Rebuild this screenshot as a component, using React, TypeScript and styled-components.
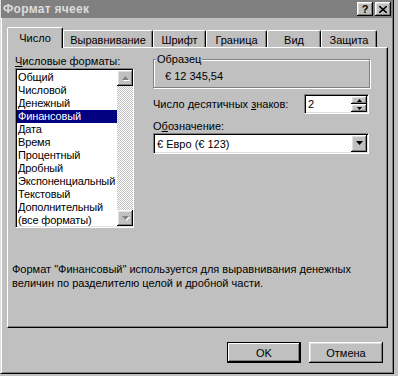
import * as React from "react"
import styled, { createGlobalStyle } from "styled-components"

const GlobalStyle = createGlobalStyle`
  html, body {
    margin: 0;
    padding: 0;
    background: #c0c0c0;
  }
  body {
    font-family: "Liberation Sans", Arial, sans-serif;
    font-size: 11px;
    color: #000;
  }
`

const raised = `
  box-shadow: inset -1px -1px #000, inset 1px 1px #fff, inset -2px -2px #808080, inset 2px 2px #dfdfdf;
`

const sunken = `
  border: 1px solid;
  border-color: #808080 #fff #fff #808080;
  box-shadow: inset 1px 1px #000, inset -1px -1px #dfdfdf;
`

const Dialog = styled.div`
  width: 394px;
  height: 374px;
  box-sizing: border-box;
  display: flex;
  flex-direction: column;
  background: #c0c0c0;
  border-left: 1px solid #dfdfdf;
  border-right: 1px solid #000;
  border-bottom: 1px solid #000;
  box-shadow: inset 1px 0 #fff, inset -1px -1px #808080;
`

const TitleBar = styled.div`
  height: 18px;
  display: flex;
  align-items: center;
  background: #808080;
  padding: 0 2px 0 2px;
`

const Title = styled.div`
  flex: 1;
  color: #dcdcdc;
  font-weight: bold;
  font-size: 12px;
  letter-spacing: 0.3px;
`

const TitleButton = styled.div`
  width: 16px;
  height: 14px;
  margin-left: 2px;
  background: #c0c0c0;
  ${raised}
  display: flex;
  align-items: center;
  justify-content: center;
  font-weight: bold;
  font-size: 11px;
  line-height: 14px;
`

const Body = styled.div`
  padding: 9px 5px 0 6px;
`

const TabStrip = styled.div`
  height: 20px;
  display: flex;
  align-items: flex-end;
  position: relative;
  z-index: 1;
`

const Tab = styled.div<{ $w: number; $active?: boolean }>`
  width: ${p => p.$w}px;
  height: ${p => (p.$active ? 21 : 17)}px;
  margin-bottom: ${p => (p.$active ? -1 : 0)}px;
  box-sizing: border-box;
  background: #c0c0c0;
  border-top: 1px solid #fff;
  border-left: 1px solid #fff;
  border-right: 1px solid #000;
  border-radius: 2px 2px 0 0;
  box-shadow: inset -1px 0 #808080;
  display: flex;
  align-items: center;
  justify-content: center;
  padding-top: ${p => (p.$active ? 0 : 1)}px;
  white-space: nowrap;
`

const Panel = styled.div`
  width: 381px;
  height: 281px;
  box-sizing: border-box;
  border-top: 1px solid #fff;
  border-left: 1px solid #fff;
  border-right: 1px solid #000;
  border-bottom: 1px solid #000;
  box-shadow: inset -1px -1px #808080;
  padding: 7px 0 0 4px;
`

const TopRow = styled.div`
  display: flex;
  margin-left: 3px;
`

const LeftColumn = styled.div`
  display: flex;
  flex-direction: column;
`

const RightColumn = styled.div`
  width: 217px;
  margin-left: 19px;
  display: flex;
  flex-direction: column;
`

const Label = styled.div`
  line-height: 13px;
  height: 13px;
  white-space: nowrap;
`

const ListBox = styled.div`
  width: 119px;
  height: 160px;
  box-sizing: border-box;
  ${sunken}
  background: #fff;
  display: flex;
  padding: 1px 0 1px 1px;
`

const Items = styled.div`
  flex: 1;
  min-width: 0;
  padding-top: 1px;
  overflow: hidden;
`

const Item = styled.div<{ $selected?: boolean }>`
  height: 13px;
  line-height: 13px;
  padding-left: 1px;
  letter-spacing: -0.15px;
  white-space: nowrap;
  background: ${p => (p.$selected ? "#000080" : "transparent")};
  color: ${p => (p.$selected ? "#fff" : "#000")};
`

const ScrollBar = styled.div`
  width: 16px;
  flex-shrink: 0;
  display: flex;
  flex-direction: column;
`

const Track = styled.div`
  flex: 1;
  background: repeating-conic-gradient(#c0c0c0 0 25%, #fff 0 50%) 0 0 / 2px 2px;
`

const ArrowButton = styled.div<{ $h?: number }>`
  width: 16px;
  height: ${p => p.$h ?? 16}px;
  flex-shrink: 0;
  background: #c0c0c0;
  ${raised}
  display: flex;
  align-items: center;
  justify-content: center;
`

const GroupBox = styled.div`
  position: relative;
  margin-top: 4px;
  height: 29px;
  box-sizing: border-box;
  border: 1px solid #808080;
  box-shadow: inset 1px 1px #fff, 1px 1px #fff;
  padding: 10px 0 0 11px;
`

const Legend = styled.div`
  position: absolute;
  top: -7px;
  left: 2px;
  padding: 0 1px;
  line-height: 13px;
  background: #c0c0c0;
`

const SampleText = styled.div`
  line-height: 13px;
`

const SpinRow = styled.div`
  margin-top: 6px;
  height: 20px;
  display: flex;
  align-items: center;
  justify-content: space-between;
  padding-right: 1px;
`

const Field = styled.div<{ $w: number; $h: number }>`
  width: ${p => p.$w}px;
  height: ${p => p.$h}px;
  box-sizing: border-box;
  ${sunken}
  background: #fff;
  display: flex;
  align-items: stretch;
  padding: 1px;
`

const FieldText = styled.div`
  flex: 1;
  display: flex;
  align-items: center;
  padding-left: 2px;
  white-space: nowrap;
`

const SpinButtons = styled.div`
  display: flex;
  flex-direction: column;
`

const SymbolLabel = styled(Label)`
  margin-top: 6px;
`

const ComboWrap = styled.div`
  padding-right: 1px;
`

const Description = styled.div`
  margin-top: 34px;
  line-height: 14px;
`

const ButtonRow = styled.div`
  display: flex;
  justify-content: flex-end;
  gap: 8px;
  margin-top: 14px;
  padding-right: 5px;
`

const Button = styled.div<{ $default?: boolean }>`
  width: 74px;
  height: 21px;
  box-sizing: border-box;
  background: #c0c0c0;
  display: flex;
  align-items: center;
  justify-content: center;
  ${p =>
    p.$default
      ? `border: 1px solid #000; box-shadow: inset -1px -1px #000, inset 1px 1px #fff, inset -2px -2px #808080;`
      : raised}
`

const Arrow = ({ up, disabled }: { up?: boolean; disabled?: boolean }) => (
  <svg width="7" height="5" viewBox="0 0 7 5" style={{ overflow: "visible" }}>
    {disabled && (
      <polygon
        points={up ? "4.5,1 8,5 1,5" : "1,1 8,1 4.5,5"}
        fill="#fff"
      />
    )}
    <polygon
      points={up ? "3.5,0 7,4 0,4" : "0,0 7,0 3.5,4"}
      fill={disabled ? "#808080" : "#000"}
    />
  </svg>
)

const SmallArrow = ({ up }: { up?: boolean }) => (
  <svg width="5" height="3" viewBox="0 0 5 3">
    <polygon points={up ? "2.5,0 5,3 0,3" : "0,0 5,0 2.5,3"} fill="#000" />
  </svg>
)

const formats = [
  "Общий",
  "Числовой",
  "Денежный",
  "Финансовый",
  "Дата",
  "Время",
  "Процентный",
  "Дробный",
  "Экспоненциальный",
  "Текстовый",
  "Дополнительный",
  "(все форматы)",
]

const tabs = [
  { label: "Число", w: 56 },
  { label: "Выравнивание", w: 90 },
  { label: "Шрифт", w: 53 },
  { label: "Граница", w: 61 },
  { label: "Вид", w: 54 },
  { label: "Защита", w: 56 },
]

export default function App() {
  return (
    <>
      <GlobalStyle />
      <Dialog>
        <TitleBar>
          <Title>Формат ячеек</Title>
          <TitleButton>?</TitleButton>
          <TitleButton>
            <svg width="8" height="7" viewBox="0 0 8 7">
              <path d="M0 0 L8 7 M8 0 L0 7" stroke="#000" strokeWidth="1.6" />
            </svg>
          </TitleButton>
        </TitleBar>
        <Body>
          <TabStrip>
            {tabs.map((t, i) => (
              <Tab key={t.label} $w={t.w} $active={i === 0}>
                {t.label}
              </Tab>
            ))}
          </TabStrip>
          <Panel>
            <TopRow>
              <LeftColumn>
                <Label>
                  <u>Ч</u>исловые форматы:
                </Label>
                <ListBox>
                  <Items>
                    {formats.map(f => (
                      <Item key={f} $selected={f === "Финансовый"}>
                        {f}
                      </Item>
                    ))}
                  </Items>
                  <ScrollBar>
                    <ArrowButton>
                      <Arrow up disabled />
                    </ArrowButton>
                    <Track />
                    <ArrowButton>
                      <Arrow disabled />
                    </ArrowButton>
                  </ScrollBar>
                </ListBox>
              </LeftColumn>
              <RightColumn>
                <GroupBox>
                  <Legend>Образец</Legend>
                  <SampleText>€ 12 345,54</SampleText>
                </GroupBox>
                <SpinRow>
                  <Label>
                    Число десятичных <u>з</u>наков:
                  </Label>
                  <Field $w={65} $h={20}>
                    <FieldText>2</FieldText>
                    <SpinButtons>
                      <ArrowButton $h={8}>
                        <SmallArrow up />
                      </ArrowButton>
                      <ArrowButton $h={8}>
                        <SmallArrow />
                      </ArrowButton>
                    </SpinButtons>
                  </Field>
                </SpinRow>
                <SymbolLabel>
                  О<u>б</u>означение:
                </SymbolLabel>
                <ComboWrap>
                  <Field $w={216} $h={21}>
                    <FieldText>€ Евро (€ 123)</FieldText>
                    <ArrowButton $h={17}>
                      <Arrow />
                    </ArrowButton>
                  </Field>
                </ComboWrap>
              </RightColumn>
            </TopRow>
            <Description>
              Формат "Финансовый" используется для выравнивания денежных
              <br />
              величин по разделителю целой и дробной части.
            </Description>
          </Panel>
          <ButtonRow>
            <Button $default>OK</Button>
            <Button>Отмена</Button>
          </ButtonRow>
        </Body>
      </Dialog>
    </>
  )
}
